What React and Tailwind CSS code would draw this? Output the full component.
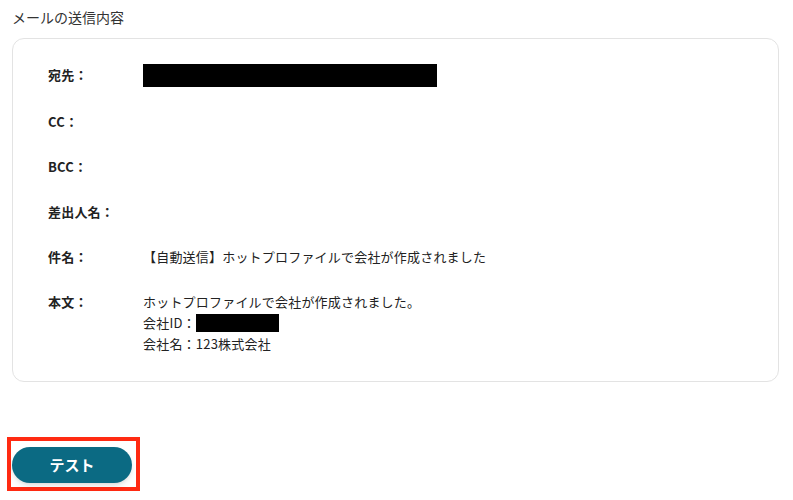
const rows = [
  { label: '宛先：', value: <span className="inline-block h-[23px] w-[294px] bg-black align-top" /> },
  { label: 'CC：', value: null },
  { label: 'BCC：', value: null },
  { label: '差出人名：', value: null },
  { label: '件名：', value: '【自動送信】ホットプロファイルで会社が作成されました' },
  {
    label: '本文：',
    value: (
      <>
        <div>ホットプロファイルで会社が作成されました。</div>
        <div className="flex items-center">
          会社ID：<span className="inline-block h-[18px] w-[83px] bg-black" />
        </div>
        <div>会社名：123株式会社</div>
      </>
    ),
  },
];

export default function App() {
  return (
    <div
      className="min-h-[500px] bg-white text-[#333]"
      style={{ fontFamily: '"Noto Sans CJK JP", "Noto Sans", sans-serif' }}
    >
      <div className="px-3 pt-[7px]">
        <h2 className="text-[14px] leading-[20px] text-[#333]">メールの送信内容</h2>
      </div>
      <div className="ml-3 mr-[14px] mt-[11px] rounded-xl border border-[#e3e3e3] pb-[27px] pl-[35px] pr-6 pt-[25px]">
        <div className="flex flex-col gap-6">
          {rows.map((r) => (
            <div key={r.label} className="flex items-start text-[13px] leading-[21px] tracking-[0.2px]">
              <div className="w-[95px] shrink-0 self-center font-bold text-[#222] [&:not(:only-child)]:self-start">
                {r.label}
              </div>
              <div className="min-h-[21px] text-[#222]">{r.value}</div>
            </div>
          ))}
        </div>
      </div>
      <div className="ml-[7px] mt-[55px] inline-block border-4 border-[#ff2a12] pb-1 pl-px pr-1 pt-[6px]">
        <button className="flex h-9 w-[120px] items-center justify-center rounded-full bg-[#0b6a83] text-[15px] font-bold text-white shadow-md">
          テスト
        </button>
      </div>
    </div>
  );
}
